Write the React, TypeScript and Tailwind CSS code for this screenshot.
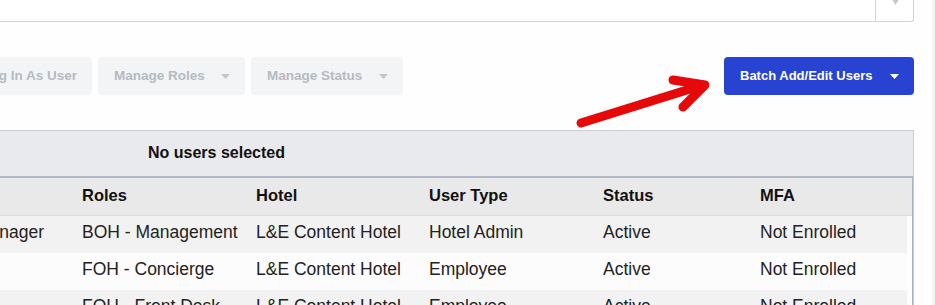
import React from "react";

function Caret({ className }: { className?: string }) {
  return (
    <svg className={className} width="9" height="5" viewBox="0 0 9 5" fill="currentColor">
      <path d="M0 0h9L4.5 5z" />
    </svg>
  );
}

const rows = [
  ["Manager", "BOH - Management", "L&E Content Hotel", "Hotel Admin", "Active", "Not Enrolled"],
  ["", "FOH - Concierge", "L&E Content Hotel", "Employee", "Active", "Not Enrolled"],
  ["", "FOH - Front Desk", "L&E Content Hotel", "Employee", "Active", "Not Enrolled"],
];

const cols = ["w-[108px] pl-[1px]", "w-[174px]", "w-[173px]", "w-[174px]", "w-[157px]", "flex-1"];

export default function App() {
  return (
    <div className="relative flex h-[305px] w-[935px] overflow-hidden bg-[#fefefe] font-['Liberation_Sans',Arial,sans-serif] text-[#222]">
      <div className="flex w-[914px] flex-col">
        {/* search / select box */}
        <div className="ml-[-10px] flex h-[22px] shrink-0 justify-end rounded-br-[3px] border-r border-b border-[#d4d4d4] bg-white">
          <div className="relative w-[38px] border-l border-[#d4d4d4]">
            <svg className="absolute top-[-4px] left-[14px] text-[#c8c8c8]" width="11" height="9" viewBox="0 0 11 9" fill="currentColor">
              <path d="M0 0h11L5.5 9z" />
            </svg>
          </div>
        </div>

        {/* action buttons */}
        <div className="mt-[35px] ml-[-40px] flex h-[38px] shrink-0 gap-[6px] text-[13.5px] font-bold">
          <div className="flex w-[132px] items-center justify-end rounded-[4px] bg-[#f3f4f6] pr-[15px] text-[#b6bac2]">
            Log In As User
          </div>
          <div className="flex w-[147px] items-center justify-between rounded-[4px] bg-[#f3f4f6] pr-[15px] pl-4 text-[#b6bac2]">
            <span>Manage Roles</span>
            <Caret className="text-[#c3c6cd]" />
          </div>
          <div className="flex w-[152px] items-center justify-between rounded-[4px] bg-[#f3f4f6] pr-[15px] pl-4 text-[#b6bac2]">
            <span>Manage Status</span>
            <Caret className="text-[#c3c6cd]" />
          </div>
          <div className="ml-auto flex w-[190px] items-center justify-between rounded-[4px] bg-[#2843d1] pr-[15px] pl-4 text-[13px] text-white">
            <span>Batch Add/Edit Users</span>
            <Caret />
          </div>
        </div>

        {/* users table */}
        <div className="mt-[35px] ml-[-26px] flex shrink-0 flex-col border-t border-r border-[#c9ccd5]">
          <div className="flex h-[45px] items-center bg-[#e9eaee] pb-[2px] pl-[174px] text-base font-bold text-[#111]">
            No users selected
          </div>
          <div className="flex flex-col border-t-2 border-r border-[#b3b8c6] border-r-[#a9b1c6]">
            <div className="flex h-[38px] items-center border-b border-[#dcdcdc] bg-[#e9e9e9] pb-[3px] text-[16.5px] font-bold text-[#111]">
              {["", "Roles", "Hotel", "User Type", "Status", "MFA"].map((h, i) => (
                <div key={i} className={cols[i]}>
                  {h}
                </div>
              ))}
            </div>
            <div className="flex flex-col pr-[5px]">
              {rows.map((r, ri) => (
                <div
                  key={ri}
                  className={`flex h-[37px] items-center pb-[5px] text-[17.5px] ${ri % 2 === 0 ? "bg-[#f2f2f2]" : "bg-[#fcfcfc]"}`}
                >
                  {r.map((c, ci) => (
                    <div key={ci} className={`${cols[ci]} whitespace-nowrap`}>
                      {c}
                    </div>
                  ))}
                </div>
              ))}
            </div>
          </div>
        </div>
      </div>
      <div className="w-[18px]" />
      <div className="w-[3px] bg-[#f4f4f4]" />

      {/* annotation arrow */}
      <svg className="pointer-events-none absolute top-0 left-0" width="935" height="305">
        <g stroke="#e60909" strokeWidth="9" strokeLinecap="round" strokeLinejoin="round" fill="none">
          <path d="M581 123L703 85" />
          <path d="M673 80L705 85L683 107" />
        </g>
      </svg>
    </div>
  );
}
